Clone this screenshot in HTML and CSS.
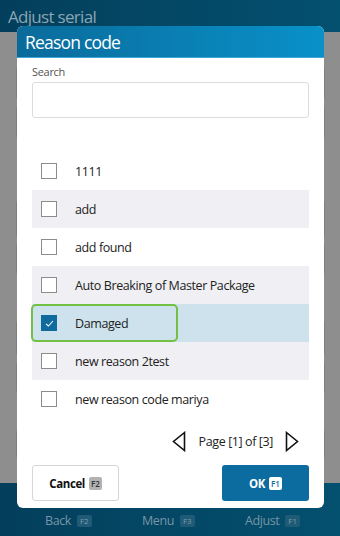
FILE: index.html
```html
<!DOCTYPE html>
<html>
<head>
<meta charset="utf-8">
<link rel="stylesheet" href="styles.css">
</head>
<body>
<div class="app">
  <header class="topbar"><span class="apptitle">Adjust serial</span></header>
  <main class="form">
    <div class="lbl"></div>
    <div class="box b1"></div>
    <div class="box b2"></div>
    <div class="lbl l2"></div>
    <div class="box b3"></div>
    <div class="box b4"></div>
    <div class="lbl l3"></div>
    <div class="box b5"></div>
    <div class="box b6"></div>
    <div class="lbl l4"></div>
    <div class="box b7"></div>
  </main>
  <footer class="bottombar">
    <div class="navitem"><span>Back</span><span class="nkey">F2</span></div>
    <div class="navitem"><span>Menu</span><span class="nkey">F3</span></div>
    <div class="navitem"><span>Adjust</span><span class="nkey">F1</span></div>
  </footer>
</div>

<div class="modal">
  <div class="modal-head">Reason code</div>
  <div class="modal-body">
    <label class="search-label">Search</label>
    <div class="search-input"></div>
    <ul class="list">
      <li class="row"><span class="cb"></span><span>1111</span></li>
      <li class="row alt"><span class="cb"></span><span>add</span></li>
      <li class="row"><span class="cb"></span><span>add found</span></li>
      <li class="row alt"><span class="cb"></span><span>Auto Breaking of Master Package</span></li>
      <li class="row sel"><span class="focus"><span class="cb on"><svg width="11" height="11" viewBox="0 0 11 11"><path d="M2 5.8 L4.4 8 L9 3" fill="none" stroke="#fff" stroke-width="1.1"/></svg></span><span>Damaged</span></span></li>
      <li class="row alt"><span class="cb"></span><span>new reason 2test</span></li>
      <li class="row"><span class="cb"></span><span>new reason code mariya</span></li>
    </ul>
    <div class="pager">
      <svg width="14" height="21" viewBox="0 0 14 21"><path d="M12.5 1.5 L1.5 10.5 L12.5 19.5 Z" fill="none" stroke="#111" stroke-width="1.6" stroke-linejoin="miter"/></svg>
      <span class="ptext">Page [1] of [3]</span>
      <svg width="14" height="21" viewBox="0 0 14 21"><path d="M1.5 1.5 L12.5 10.5 L1.5 19.5 Z" fill="none" stroke="#111" stroke-width="1.6" stroke-linejoin="miter"/></svg>
    </div>
    <div class="actions">
      <button class="btn cancel">Cancel <span class="key gray">F2</span></button>
      <button class="btn ok">OK <span class="key white">F1</span></button>
    </div>
  </div>
</div>
</body>
</html>
```

FILE: styles.css
```css
* { box-sizing: border-box; }
html, body { margin: 0; padding: 0; }
body {
  width: 340px;
  height: 536px;
  overflow: hidden;
  font-family: "Open Sans", "Noto Sans", sans-serif;
  background: #8e8e8e;
  position: relative;
}
.app {
  height: 536px;
  display: flex;
  flex-direction: column;
}
.topbar {
  height: 32px;
  background: linear-gradient(90deg, #033f5c, #04506f);
  display: flex;
  align-items: center;
  padding-left: 8px;
  flex: none;
}
.apptitle {
  color: #8aa5b4;
  font-size: 17px;
  letter-spacing: -0.7px;
}
.form {
  flex: 1;
  padding: 12px 15px 0 16px;
  display: flex;
  flex-direction: column;
  background: #8e8e8e;
}
.lbl { height: 10px; width: 20px; margin-bottom: 6px; }
.box {
  border: 1px solid #7f7f7f;
  border-radius: 3px;
  height: 32px;
  margin-bottom: 5px;
}
.b1 { height: 34px; margin-top: 6px; }
.b2 { height: 34px; }
.l2 { margin-top: 40px; }
.b3 { height: 38px; }
.b4 { height: 32px; }
.l3 { margin-top: 24px; }
.b5 { height: 36px; }
.b6 { height: 33px; }
.l4 { margin-top: 14px; }
.b7 { height: 30px; }
.bottombar {
  height: 53px;
  flex: none;
  background: linear-gradient(90deg, #033f5c, #04506f);
  display: flex;
  justify-content: space-between;
  align-items: flex-end;
  padding: 0 40px 7px 45px;
}
.navitem {
  display: flex;
  align-items: center;
  gap: 6px;
  color: #7895a6;
  font-size: 12.5px;
  letter-spacing: -0.4px;
}
.nkey {
  background: #1f5a76;
  color: #7f9cab;
  font-size: 8px;
  padding: 2px 3px;
  border-radius: 2px;
  line-height: 8px;
  letter-spacing: 0;
}
.modal {
  position: absolute;
  left: 17px;
  top: 26px;
  width: 307px;
  height: 482px;
  background: #fff;
  border-radius: 6px;
  overflow: hidden;
  display: flex;
  flex-direction: column;
}
.modal-head {
  height: 32px;
  background: linear-gradient(90deg, #0a6b9b, #0991c9);
  border-bottom: 1px solid #41a7d6;
  color: #fff;
  font-size: 17.5px;
  padding-left: 8px;
  display: flex;
  align-items: center;
  letter-spacing: -0.8px;
  flex: none;
}
.modal-body {
  padding: 7px 15px 7px 15px;
  display: flex;
  flex-direction: column;
  flex: 1;
}
.search-label {
  font-size: 11px;
  color: #555;
  line-height: 14px;
  letter-spacing: -0.3px;
}
.search-input {
  margin-top: 3px;
  height: 36px;
  border: 1px solid #dcdcdc;
  border-radius: 3px;
}
.list {
  list-style: none;
  margin: 34px 0 0 0;
  padding: 0;
}
.row {
  height: 38px;
  display: flex;
  align-items: center;
  padding-left: 9px;
  gap: 18px;
  font-size: 12.5px;
  letter-spacing: -0.4px;
  color: #222;
}
.row.alt { background: #efeff4; }
.row.sel { background: #cde2ec; padding-left: 0; }
.focus {
  display: flex;
  align-items: center;
  gap: 18px;
  height: 38px;
  width: 147px;
  margin-left: -1px;
  padding-left: 8px;
  border: 2px solid #72c044;
  border-radius: 5px;
}
.cb {
  width: 16px;
  height: 16px;
  border: 1.5px solid #8c8c8c;
  background: #fff;
  flex: none;
  display: flex;
  align-items: center;
  justify-content: center;
}
.cb.on {
  background: #0f6a9e;
  border-color: #0f6a9e;
}
.pager {
  margin-top: 13px;
  display: flex;
  align-items: center;
  justify-content: flex-end;
  padding-right: 10px;
  gap: 0;
}
.ptext {
  font-size: 12.5px;
  letter-spacing: -0.4px;
  color: #222;
  margin: 0 12px 0 13px;
}
.actions {
  margin-top: auto;
  display: flex;
  justify-content: space-between;
}
.btn {
  width: 87px;
  height: 36px;
  border-radius: 3px;
  font-family: inherit;
  font-weight: 700;
  font-size: 11.5px;
  letter-spacing: -0.4px;
  display: flex;
  align-items: center;
  justify-content: center;
  gap: 4px;
  padding: 0;
}
.cancel {
  background: #fff;
  border: 1px solid #d6d6d6;
  color: #111;
}
.ok {
  background: #0c6c9f;
  border: none;
  color: #fff;
}
.key {
  font-size: 8px;
  font-weight: 600;
  line-height: 9px;
  padding: 2px 2px;
  border-radius: 2px;
  letter-spacing: 0;
}
.key.gray { background: #b2b2b2; color: #333; }
.key.white { background: #fff; color: #0c6c9f; }
```
